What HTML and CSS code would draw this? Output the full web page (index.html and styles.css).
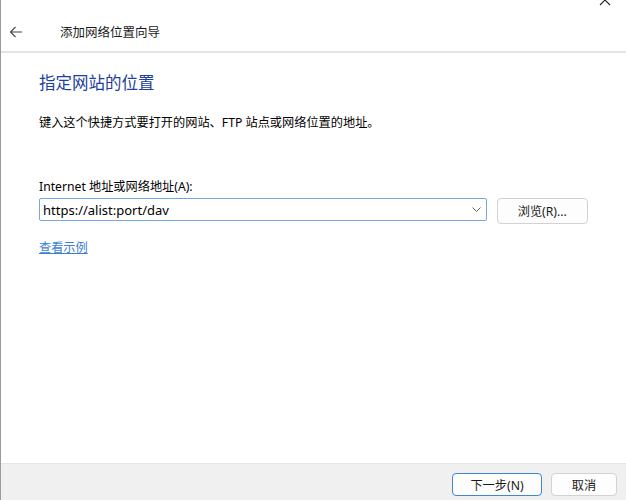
FILE: index.html
```html
<!DOCTYPE html>
<html lang="zh-CN">
<head>
    <meta charset="UTF-8">
    <title>添加网络位置向导</title>
    <link rel="stylesheet" href="styles.css">
</head>
<body>

<div class="window">
    <!-- 关闭按钮（被裁掉一半） -->
    <svg class="close" width="12" height="12" viewBox="0 0 12 12">
        <path d="M1 1 L11 11 M11 1 L1 11" stroke="#222" stroke-width="1.1" fill="none"/>
    </svg>

    <div class="header">
        <svg class="back" width="14" height="12" viewBox="0 0 14 12">
            <path d="M13 6 H1.5 M6.5 1 L1.5 6 L6.5 11" stroke="#444" stroke-width="1.1" fill="none"/>
        </svg>
        <span class="wizard-title">添加网络位置向导</span>
    </div>

    <div class="content">
        <h1 class="main-title">指定网站的位置</h1>
        <p class="desc">键入这个快捷方式要打开的网站、FTP 站点或网络位置的地址。</p>

        <label class="field-label" for="addr">Internet 地址或网络地址(A):</label>
        <div class="field-row">
            <div class="combo">
                <input id="addr" type="text" value="https://alist:port/dav">
                <svg class="chevron" width="9" height="5" viewBox="0 0 9 5">
                    <path d="M0.5 0.5 L4.5 4.5 L8.5 0.5" stroke="#666" stroke-width="1" fill="none"/>
                </svg>
            </div>
            <button class="btn">浏览(R)...</button>
        </div>

        <a class="example-link" href="#">查看示例</a>
    </div>

    <div class="footer">
        <button class="btn btn-default">下一步(N)</button>
        <button class="btn btn-cancel">取消</button>
    </div>
</div>

</body>
</html>
```

FILE: styles.css
```css
/* 基本样式 */
html, body {
    margin: 0;
    padding: 0;
    background: #fff;
}
body {
    font-family: "Noto Sans", "Noto Sans CJK SC", sans-serif;
    font-size: 12.2px;
    color: #000;
}
.window {
    position: relative;
    width: 625px;
    height: 500px;
    border-left: 1px solid #9a9a9a;
    display: flex;
    flex-direction: column;
    overflow: hidden;
}
.close {
    position: absolute;
    top: -6px;
    right: 15px;
}

/* 顶部标题栏 */
.header {
    box-sizing: border-box;
    height: 53px;
    display: flex;
    align-items: center;
    padding-top: 12px;
    border-bottom: 2px solid #e3e3e3;
}
.back {
    margin-left: 8px;
    margin-right: 37px;
}
.wizard-title {
    font-size: 12.5px;
    color: #1a1a1a;
}

/* 内容区 */
.content {
    flex: 1;
    padding: 0 38px;
}
.main-title {
    margin: 17px 0 0;
    font-size: 16.5px;
    font-weight: normal;
    color: #1d3f9e;
    line-height: 26px;
}
.desc {
    margin: 18px 0 0;
    line-height: 18px;
}
.field-label {
    display: block;
    margin-top: 46px;
    line-height: 18px;
}
.field-row {
    display: flex;
    align-items: flex-start;
    margin-top: 2px;
}
.combo {
    position: relative;
    width: 450px;
    height: 23px;
}
.combo input {
    box-sizing: border-box;
    width: 100%;
    height: 23px;
    margin: 0;
    padding: 0 20px 0 3px;
    border: 1px solid #6fa8e2;
    border-radius: 2px;
    font-family: inherit;
    font-size: 13px;
    color: #000;
    outline: none;
}
.chevron {
    position: absolute;
    right: 6px;
    top: 9px;
}
.btn {
    box-sizing: border-box;
    height: 24px;
    padding: 0;
    border: 1px solid #d2d2d2;
    border-radius: 4px;
    background: #fdfdfd;
    font-family: inherit;
    font-size: 12.2px;
    color: #1a1a1a;
}
.field-row .btn {
    width: 92px;
    height: 26px;
    margin-left: 10px;
}
.example-link {
    display: inline-block;
    margin-top: 15px;
    color: #3c7fd0;
    text-decoration: underline;
    line-height: 18px;
}

/* 底部按钮栏 */
.footer {
    height: 37px;
    background: #f0f0f0;
    border-top: 1px solid #e6e6e6;
    display: flex;
    justify-content: flex-end;
    align-items: flex-start;
    padding-top: 9px;
    padding-right: 9px;
    box-sizing: border-box;
}
.footer .btn {
    height: 23px;
}
.btn-default {
    width: 90px;
    border-color: #3f86d8;
}
.btn-cancel {
    width: 66px;
    margin-left: 9px;
}
```
